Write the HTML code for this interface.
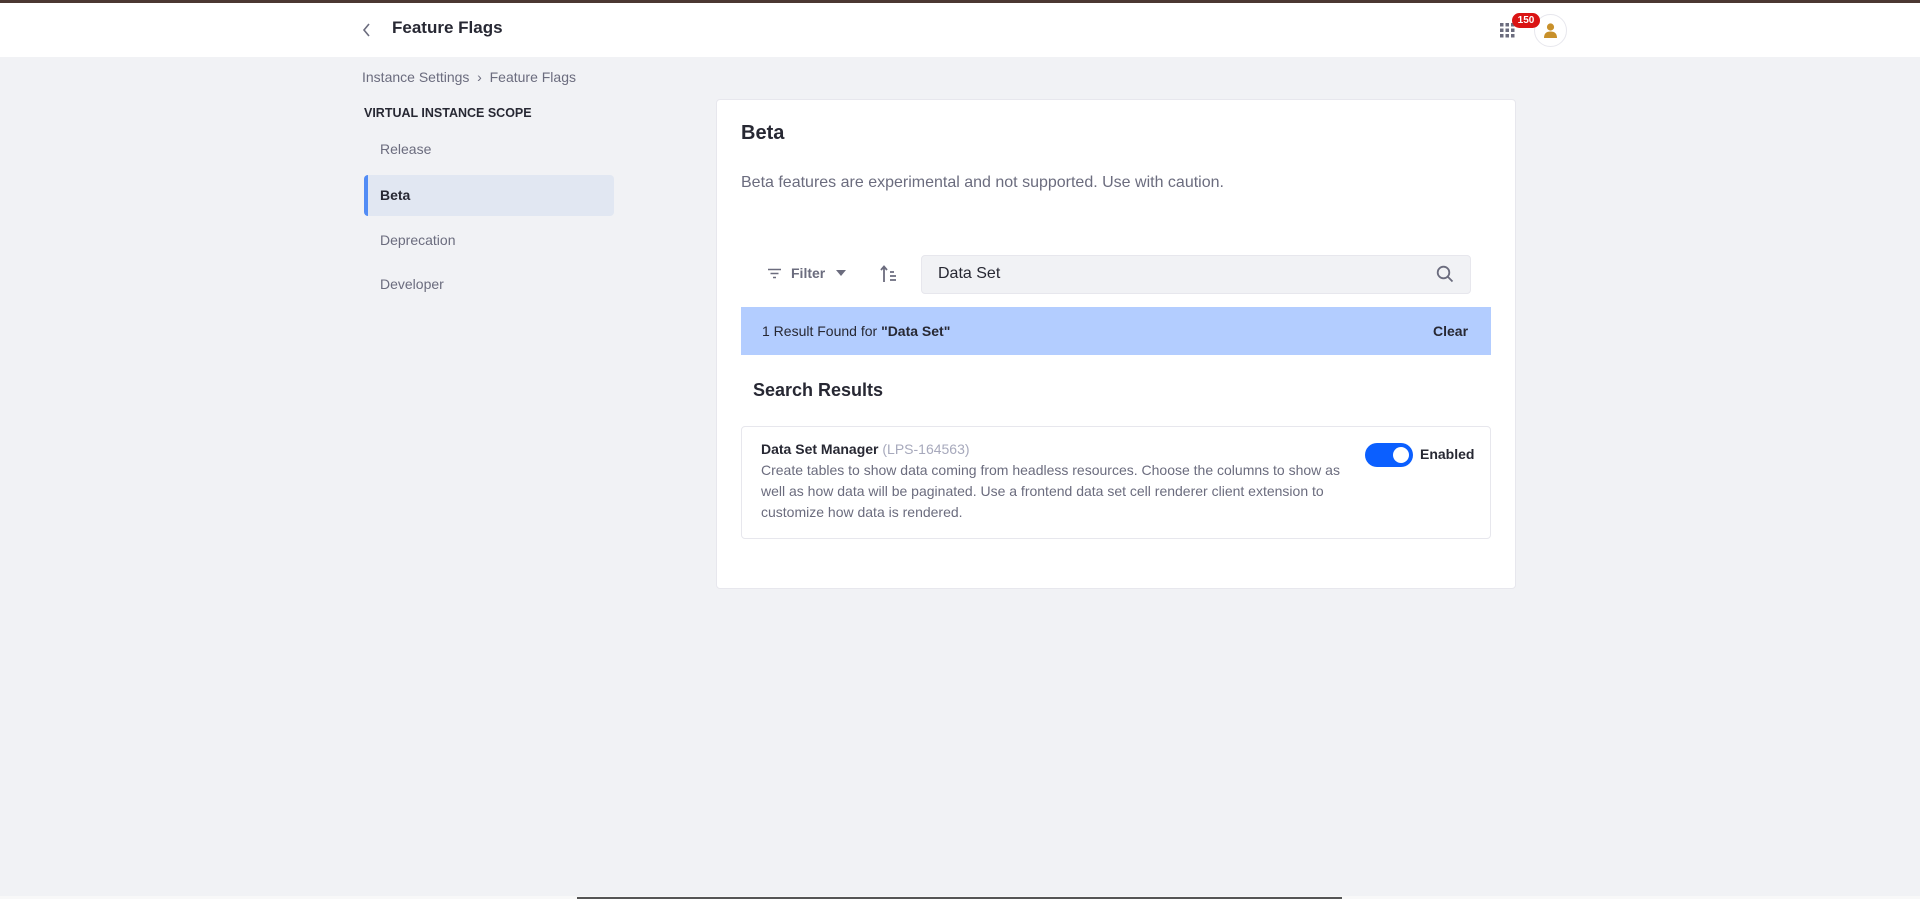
<!DOCTYPE html>
<html><head><meta charset="utf-8"><style>
*{box-sizing:border-box;margin:0;padding:0}
body{width:1920px;height:899px;background:#f1f2f5;font-family:"Liberation Sans",sans-serif;position:relative;overflow:hidden;color:#272833}
.a{position:absolute}
</style></head><body>
<div class="a" style="left:0;top:0;width:1920px;height:3px;background:#4b3832"></div>
<div class="a" style="left:0;top:3px;width:1920px;height:54px;background:#fff"></div>
<svg class="a" style="left:361px;top:22px" width="12" height="16" viewBox="0 0 12 16"><path d="M8 2 L3 8 L8 14" fill="none" stroke="#6b6c7e" stroke-width="1.6"/></svg>
<div class="a" style="left:392px;top:18px;font-size:17px;font-weight:bold">Feature Flags</div>
<svg class="a" style="left:1500px;top:23px" width="15" height="15" viewBox="0 0 15 15" fill="#6b6c7e"><rect x="0" y="0" width="3.5" height="3.5"/><rect x="5.5" y="0" width="3.5" height="3.5"/><rect x="11" y="0" width="3.5" height="3.5"/><rect x="0" y="5.5" width="3.5" height="3.5"/><rect x="5.5" y="5.5" width="3.5" height="3.5"/><rect x="11" y="5.5" width="3.5" height="3.5"/><rect x="0" y="11" width="3.5" height="3.5"/><rect x="5.5" y="11" width="3.5" height="3.5"/><rect x="11" y="11" width="3.5" height="3.5"/></svg>
<div class="a" style="left:1534px;top:14px;width:33px;height:33px;border:1px solid #e7e7ed;border-radius:50%;background:#fff"></div>
<svg class="a" style="left:1541px;top:21px" width="19" height="19" viewBox="0 0 19 19" fill="#c8902a"><circle cx="9.5" cy="6" r="3.6"/><path d="M3 17 Q3 10.5 9.5 10.5 Q16 10.5 16 17 Z"/></svg>
<div class="a" style="left:1512px;top:13px;width:28px;height:15px;background:#da1414;border-radius:8px;color:#fff;font-size:10px;font-weight:bold;text-align:center;line-height:15px">150</div>
<div class="a" style="left:362px;top:69px;font-size:14px;color:#6b6c7e">Instance Settings &nbsp;›&nbsp; Feature Flags</div>
<div class="a" style="left:364px;top:106px;font-size:12.5px;font-weight:bold">VIRTUAL INSTANCE SCOPE</div>
<div class="a" style="left:380px;top:141px;font-size:14px;color:#6b6c7e">Release</div>
<div class="a" style="left:364px;top:175px;width:250px;height:41px;background:#e1e7f2;border-radius:4px;border-left:4px solid #528cf5"></div>
<div class="a" style="left:380px;top:187px;font-size:14px;font-weight:bold">Beta</div>
<div class="a" style="left:380px;top:232px;font-size:14px;color:#6b6c7e">Deprecation</div>
<div class="a" style="left:380px;top:276px;font-size:14px;color:#6b6c7e">Developer</div>
<div class="a" style="left:716px;top:99px;width:800px;height:490px;background:#fff;border:1px solid #e7e7ed;border-radius:4px"></div>
<div class="a" style="left:741px;top:122px;font-size:20px;font-weight:bold">Beta</div>
<div class="a" style="left:741px;top:174px;font-size:16px;color:#6b6c7e">Beta features are experimental and not supported. Use with caution.</div>
<svg class="a" style="left:768px;top:268px" width="13" height="11" viewBox="0 0 13 11" stroke="#6b6c7e" stroke-width="1.5"><path d="M0 1.5H13M2.5 5.5H10.5M5 9.5H8"/></svg>
<div class="a" style="left:791px;top:265px;font-size:14px;font-weight:bold;color:#6b6c7e">Filter</div>
<svg class="a" style="left:836px;top:270px" width="10" height="6"><path d="M0 0H10L5 6Z" fill="#6b6c7e"/></svg>
<svg class="a" style="left:880px;top:265px" width="18" height="18" viewBox="0 0 18 18" stroke="#6b6c7e" stroke-width="1.8" fill="none"><path d="M4 17V2M1 5L4 1.5L7 5M10 7H14M10 11H16M10 15H16"/></svg>
<div class="a" style="left:921px;top:255px;width:550px;height:39px;background:#f1f2f5;border:1px solid #e7e7ed;border-radius:4px"></div>
<div class="a" style="left:938px;top:265px;font-size:16px">Data Set</div>
<svg class="a" style="left:1436px;top:265px" width="18" height="18" viewBox="0 0 18 18" fill="none" stroke="#6b6c7e" stroke-width="1.8"><circle cx="7.5" cy="7.5" r="5.8"/><path d="M11.8 11.8L16.5 16.5"/></svg>
<div class="a" style="left:741px;top:307px;width:750px;height:48px;background:#b3cdff"></div>
<div class="a" style="left:762px;top:323px;font-size:14px">1 Result Found for <b>"Data Set"</b></div>
<div class="a" style="left:1433px;top:323px;font-size:14px;font-weight:bold">Clear</div>
<div class="a" style="left:753px;top:380px;font-size:18px;font-weight:bold">Search Results</div>
<div class="a" style="left:741px;top:426px;width:750px;height:113px;background:#fff;border:1px solid #e7e7ed;border-radius:4px"></div>
<div class="a" style="left:761px;top:441px;font-size:14px;font-weight:bold">Data Set Manager <span style="font-weight:normal;color:#a7a9bc">(LPS-164563)</span></div>
<div class="a" style="left:761px;top:460px;width:580px;font-size:14px;line-height:21px;color:#6b6c7e">Create tables to show data coming from headless resources. Choose the columns to show as well as how data will be paginated. Use a frontend data set cell renderer client extension to customize how data is rendered.</div>
<div class="a" style="left:1365px;top:443px;width:48px;height:24px;background:#0b5fff;border-radius:12px"></div>
<div class="a" style="left:1393px;top:447px;width:16px;height:16px;background:#fff;border-radius:50%"></div>
<div class="a" style="left:1420px;top:446px;font-size:14px;font-weight:bold">Enabled</div>
<div class="a" style="left:0;top:896px;width:1920px;height:3px;background:#f8f8f8"></div>
<div class="a" style="left:577px;top:897px;width:765px;height:2px;background:#555"></div>
</body></html>
